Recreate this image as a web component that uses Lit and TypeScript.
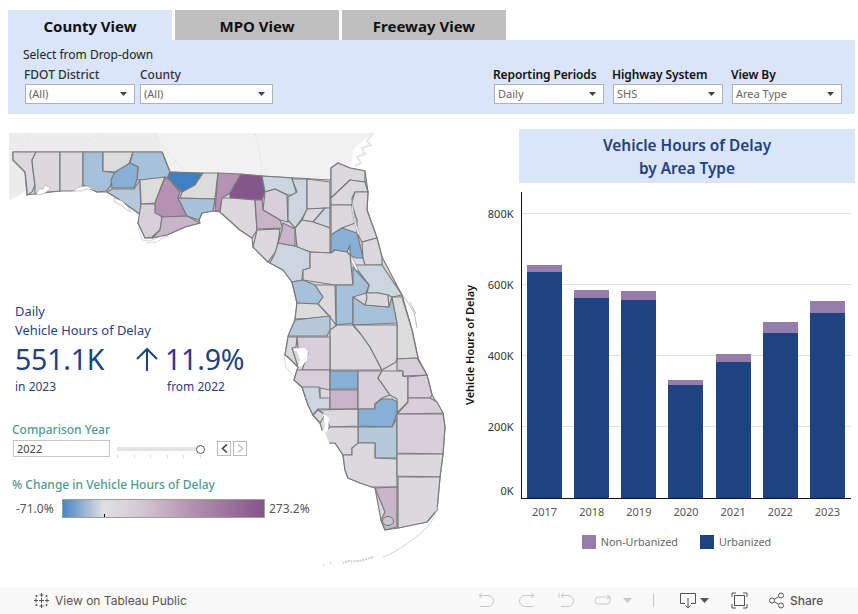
import {LitElement, html, css, svg} from 'lit';
import {customElement} from 'lit/decorators.js';

const G = '#dcd9de'; // neutral county
const N = '#dcdcdd';
const P1 = '#d9cfda';
const P2 = '#c9b5ca';
const P3 = '#b591b3';
const P4 = '#85568a';
const B1 = '#ccd6e0';
const B2 = '#b5c9da';
const B3 = '#a8c1da';
const B4 = '#88afd5';
const B5 = '#3f80c2';

// state outline, sits under the counties so no slivers show between them
const florida = '13,152 162,152 170,172 262,176 331,180 331,168 338,163 350,168 365,171 368,192 367,210 377,238 382,257 402,295 412,330 418,358 427,375 432,395 443,413 445,427 443,454 440,477 437,510 427,522 398,528 385,530 381,520 375,488 360,483 348,478 345,470 343,455 335,443 328,443 323,433 320,423 313,415 308,405 302,387 294,380 298,367 288,357 285,355 288,337 295,320 297,303 292,282 283,270 270,263 268,262 253,247 252,238 240,230 220,212 213,211 202,213 199,220 200,223 185,227 167,235 152,238 145,238 138,223 141,215 117,198 107,192 97,192 83,185 60,191 35,194 27,195 25,172 13,160';

// county outlines in page coordinates
const counties: [string, string][] = [
  [G, '13,152 36,152 32,160 33,170 35,185 32,192 27,195 27,190 25,172 13,160'],
  [G, '36,152 60,152 60,191 47,192 35,194 35,185 33,170 32,160'],
  [G, '60,152 83,152 83,185 80,190 70,191 60,191'],
  [B3, '83,152 103,152 103,171 115,173 110,187 106,191 97,192 83,185'],
  [N, '103,152 133,152 128,167 115,172 103,171'],
  [B3, '133,152 162,152 170,172 167,178 140,180 137,180 138,167 130,163'],
  [B4, '115,172 130,163 138,167 137,180 134,188 112,188 111,180'],
  [B2, '112,189 134,189 140,180 141,215 117,198 107,192'],
  [N, '140,180 165,177 155,203 141,204'],
  [P1, '141,204 155,204 162,218 160,230 152,237 145,238 138,223'],
  [P3, '165,177 170,180 180,192 178,198 187,216 163,217 155,213 155,203'],
  [P2, '162,217 187,216 200,223 185,227 167,235 152,238 160,230'],
  [B5, '170,172 203,173 195,185 182,192 168,178'],
  [N, '203,173 218,173 215,199 180,198 182,192 195,185'],
  [B3, '178,198 215,199 213,211 202,213 199,220 187,216'],
  [P3, '218,173 241,174 230,193 222,198 220,210 215,211'],
  [P4, '241,174 262,176 265,192 262,200 230,198 230,193'],
  [G, '222,198 230,198 255,200 257,230 252,238 240,230 220,212'],
  [B1, '262,176 292,178 297,195 288,195 275,189 265,192'],
  [P1, '265,192 275,189 287,195 288,222 280,220 263,210'],
  [P2, '255,200 262,200 263,210 280,220 283,228 257,229'],
  [G, '257,230 280,229 277,250 268,262 253,247'],
  [B1, '292,179 307,179 307,210 301,220 295,228 288,220 288,197 297,192'],
  [G, '307,179 330,182 330,208 307,209'],
  [G, '307,209 325,208 313,222 302,220'],
  [B1, '325,208 330,208 330,228 313,222'],
  [G, '302,220 313,222 330,228 330,253 310,252 297,247 295,228'],
  [B1, '278,243 295,246 310,252 310,268 303,270 302,280 292,282 283,270 270,263 275,253'],
  [P2, '283,223 295,229 295,246 278,243 282,230'],
  [G, '331,168 338,163 350,168 365,171 365,182 350,180 331,198 331,182'],
  [G, '331,198 350,180 365,182 368,192 355,192 352,198 353,205 331,205'],
  [G, '331,205 352,205 355,223 342,228 331,235'],
  [G, '355,192 368,192 367,210 377,238 362,242 357,233 357,220 352,205 353,198'],
  [B4, '331,235 342,228 357,233 360,245 363,258 356,258 350,255 350,245 347,252 335,250 331,253'],
  [G, '362,242 377,238 382,257 382,265 365,265 363,258'],
  [G, '310,252 331,253 335,250 347,252 350,255 353,285 335,285 303,280 303,270 310,268'],
  [B1, '354,265 365,265 382,265 402,295 392,297 388,295 378,293 367,293 369,285'],
  [B3, '353,267 369,285 366,293 353,297 353,323 336,325 336,285 353,285'],
  [B3, '353,297 365,305 389,307 392,297 397,323 353,325'],
  [G, '366,293 378,293 388,295 389,307 365,305 367,298'],
  [N, '392,297 402,297 412,330 418,358 397,359 397,323'],
  [B3, '292,282 303,280 315,285 323,297 318,304 297,303'],
  [G, '335,285 336,325 330,317 318,304 323,297 315,285'],
  [N, '297,303 318,304 330,317 320,318 295,319'],
  [B2, '295,320 320,317 330,316 330,330 327,336 288,336'],
  [G, '330,330 337,325 353,325 360,333 370,347 382,370 330,370 330,336'],
  [G, '353,325 397,325 397,359 396,362 382,370 370,347 360,333'],
  [P1, '297,337 330,337 330,370 302,370 308,353 303,350 298,348'],
  [G, '288,337 297,337 296,347 292,348 298,367 288,357 285,355'],
  [P1, '297,370 330,370 330,390 320,388 320,398 302,387 294,380'],
  [B1, '302,387 319,387 320,398 330,398 330,409 318,409 313,415 308,405'],
  [B4, '330,371 358,371 358,389 330,389'],
  [P2, '330,390 358,390 358,409 330,409'],
  [P1, '358,371 382,371 378,378 390,395 382,398 375,404 375,409 358,409'],
  [G, '382,371 403,371 403,376 408,377 408,402 397,413 397,399 390,395 378,378'],
  [P1, '397,359 417,358 427,375 403,376 403,371 397,370'],
  [P1, '408,377 427,375 432,395 430,398 408,398'],
  [P1, '408,398 430,398 437,402 443,413 397,414 408,402'],
  [B4, '358,409 375,409 375,404 382,399 392,399 397,402 397,413 392,427 358,426'],
  [B2, '358,427 392,427 397,418 397,458 375,458 375,443 358,443'],
  [G, '318,410 358,409 358,426 330,427 325,417 323,413'],
  [G, '313,415 318,410 325,415 320,423'],
  [G, '330,427 358,427 358,447 352,448 352,455 343,455 335,443 328,443 323,433'],
  [G, '343,455 352,455 352,448 358,443 375,443 375,458 397,459 397,487 372,487 360,483 348,478 345,470'],
  [P1, '397,414 443,414 445,427 443,454 397,453'],
  [G, '397,454 443,454 440,477 397,476'],
  [G, '398,477 440,477 437,510 427,522 398,528'],
  [P2, '375,488 397,487 397,527 385,530 381,520 385,512'],
];

const bars = [
  {year: '2017', urban: 226, non: 7},
  {year: '2018', urban: 200, non: 8},
  {year: '2019', urban: 198, non: 9},
  {year: '2020', urban: 113, non: 5},
  {year: '2021', urban: 136, non: 8},
  {year: '2022', urban: 165, non: 11},
  {year: '2023', urban: 185, non: 12},
];

const caret = html`<svg class="caret" width="7" height="4" viewBox="0 0 7 4"><path d="M0 0h7L3.500 4z" fill="#444"/></svg>`;

@customElement('app-root')
export class AppRoot extends LitElement {
  static styles = css`
    :host {
      display: flex;
      flex-direction: column;
      width: 858px;
      height: 614px;
      overflow: hidden;
      position: relative;
      background: #fff;
      font-family: "Noto Sans", sans-serif;
      color: #333;
    }
    .tabs {
      display: flex;
      gap: 3px;
      margin: 10px 0 0 8px;
    }
    .tab {
      width: 164px;
      height: 30px;
      line-height: 32px;
      background: #bfbfbf;
      color: #111;
      font-size: 15px;
      font-weight: 700;
      text-align: center;
    }
    .tab.on {
      background: #dae5f9;
    }
    .filters {
      margin: 0 3px 0 8px;
      height: 74px;
      background: #dae5f9;
      box-sizing: border-box;
      padding: 7px 13px 0 15px;
    }
    .hint {
      font-size: 12px;
      line-height: 16px;
      color: #222;
    }
    .filter-row {
      display: flex;
      justify-content: space-between;
      margin-top: 4px;
    }
    .filter-group {
      display: flex;
      gap: 5px;
    }
    .filter-group.right {
      gap: 9px;
    }
    .filter label {
      display: block;
      font-size: 12px;
      line-height: 16px;
      font-weight: 500;
      color: #333;
      margin-left: 1px;
    }
    .filter.county label {
      margin-left: 0;
    }
    .right .filter label {
      font-weight: 600;
      color: #111;
      margin-left: -1px;
      letter-spacing: -0.1px;
    }
    .select {
      display: flex;
      align-items: center;
      justify-content: space-between;
      box-sizing: border-box;
      width: 110px;
      height: 20px;
      margin: 1px 0 0 2px;
      padding: 0 7px 2px 3px;
      background: #fff;
      border: 1px solid #b0b0b0;
      font-size: 11px;
      color: #666;
    }
    .select .caret {
      margin-top: 2px;
    }
    .select.wide {
      width: 133px;
      margin-left: 0;
    }
    .right .select {
      margin-left: 0;
    }
    main {
      display: grid;
      grid-template-columns: 519px 336px;
      flex: 1;
      margin-top: 15px;
      min-height: 0;
    }
    .map-panel {
      position: relative;
    }
    .map {
      position: absolute;
      left: 0;
      top: -129px;
    }
    .kpi {
      position: absolute;
      left: 15px;
      top: 173px;
      width: 240px;
      color: #1f4281;
    }
    .kpi .cap {
      font-size: 12.9px;
      line-height: 19px;
    }
    .kpi-row {
      display: grid;
      grid-template-columns: 121px 1fr;
    }
    .big {
      font-size: 28.5px;
      line-height: 38px;
      letter-spacing: -0.2px;
    }
    .delta {
      display: flex;
      align-items: center;
      gap: 7px;
    }
    .small {
      font-size: 12px;
      line-height: 16px;
      margin-top: 1px;
    }
    .small.from {
      margin-left: 31px;
    }
    .teal {
      font-size: 12px;
      font-weight: 500;
      line-height: 16px;
      color: #4e9b8f;
    }
    .year-box {
      position: absolute;
      left: 12px;
      top: 293px;
      width: 240px;
    }
    .year-row {
      display: flex;
      align-items: center;
      margin: 2px 0 0 1px;
    }
    .year-input {
      box-sizing: border-box;
      width: 97px;
      height: 17px;
      line-height: 15px;
      padding-left: 3px;
      border: 1px solid #c4c4c4;
      font-size: 11px;
      color: #444;
    }
    .slider {
      position: relative;
      width: 88px;
      height: 17px;
      margin-left: 7px;
    }
    .track {
      position: absolute;
      left: 0;
      top: 7px;
      width: 83px;
      height: 4px;
      background: #e3e3e3;
    }
    .thumb {
      position: absolute;
      left: 79px;
      top: 5px;
      width: 7px;
      height: 7px;
      border: 1px solid #555;
      border-radius: 50%;
      background: #fff;
    }
    .ticks {
      position: absolute;
      left: 0;
      top: 15px;
      display: flex;
      width: 84px;
      justify-content: space-between;
    }
    .ticks i {
      width: 1px;
      height: 3px;
      background: #ddd;
    }
    .step {
      display: flex;
      align-items: center;
      justify-content: center;
      box-sizing: border-box;
      width: 14px;
      height: 15px;
      border: 1px solid #bbb;
      margin-left: 2px;
    }
    .step.prev {
      margin-left: 12px;
    }
    .scale {
      position: absolute;
      left: 12px;
      top: 348px;
      width: 310px;
    }
    .scale-row {
      display: flex;
      align-items: center;
      margin-top: 6px;
      font-size: 12px;
      color: #555;
    }
    .scale-row .min {
      width: 50px;
      padding-left: 4px;
      box-sizing: border-box;
    }
    .ramp {
      position: relative;
      box-sizing: border-box;
      width: 203px;
      height: 19px;
      margin-right: 4px;
      border: 1px solid #a39d96;
      background: linear-gradient(90deg, #4a86c5 0%, #e0e0e0 20.5%, #d5c8d5 38%, #b795b3 62%, #85548a 100%);
    }
    .ramp i {
      position: absolute;
      left: 41px;
      bottom: 0;
      width: 1px;
      height: 3px;
      background: #111;
    }
    .chart-panel {
      display: flex;
      flex-direction: column;
    }
    .chart-title {
      height: 54px;
      background: #dae5f9;
      color: #1f4281;
      font-size: 15.4px;
      font-weight: 600;
      line-height: 23px;
      text-align: center;
      padding-top: 5px;
      box-sizing: border-box;
    }
    .chart {
      height: 307px;
      margin: 9px 0 0 2px;
    }
    .plot {
      position: relative;
      display: grid;
      grid-template-columns: repeat(7, 1fr);
      align-items: end;
      width: 330px;
      height: 307px;
      box-sizing: border-box;
      border-bottom: 1px solid #111;
    }
    .plot::before {
      content: "";
      position: absolute;
      left: 0;
      top: 0;
      bottom: -1px;
      width: 1px;
      background: #111;
    }
    .grid-line {
      position: absolute;
      left: 1px;
      right: 0;
      height: 1px;
      background: #e2e2e2;
    }
    .tick-label {
      position: absolute;
      right: 337.5px;
      font-size: 11px;
      line-height: 14px;
      color: #333;
      transform: translateY(-7px);
    }
    .y-title {
      position: absolute;
      left: -52px;
      top: 153px;
      transform: translate(-50%, -50%) rotate(-90deg);
      white-space: nowrap;
      font-size: 11px;
      font-weight: 600;
      color: #111;
    }
    .col {
      position: relative;
      display: flex;
      flex-direction: column;
      align-items: center;
    }
    .urban, .non {
      width: 35px;
    }
    .urban {
      background: #1f4281;
    }
    .non {
      background: #957dab;
    }
    .years {
      display: grid;
      grid-template-columns: repeat(7, 1fr);
      width: 330px;
      margin: 6px 0 0 2px;
      font-size: 11px;
      line-height: 14px;
      text-align: center;
      color: #555;
    }
    .legend {
      display: flex;
      justify-content: center;
      gap: 22px;
      margin: 15px 21px 0 0;
      font-size: 10.8px;
      color: #666;
    }
    .legend span {
      display: flex;
      align-items: center;
      gap: 5px;
    }
    .legend i {
      width: 14px;
      height: 14px;
    }
    footer {
      display: flex;
      align-items: center;
      height: 27px;
      background: #f9f9f9;
      font-family: Inter, "Liberation Sans", sans-serif;
      font-size: 12px;
      color: #555;
      position: relative;
    }
    footer .item {
      position: absolute;
      top: 5px;
      display: flex;
      align-items: center;
      gap: 5px;
      height: 17px;
    }
  `;

  private renderMap() {
    return html`<svg class="map" width="500" height="590" viewBox="0 0 500 590">
      <polygon points="9,133 156,133 162,152 13,152 13,160 25,172 27,190 9,201" fill="#ececec"/>
      <polygon points="156,133 373,133 358,145 353,150 352,160 350,168 338,163 331,168 331,180 262,176 170,172 162,152" fill="#f1f1f1"/>
      <path d="M373 133l-6 8 4 4-9 3 3 6-8 3 4 6-6 3" fill="none" stroke="#e6e6e6" stroke-width="2"/>
      <path d="M30 133C28 145 18 150 9 156M100 133c-6 6-20 12-26 19M156 133c2 14 20 26 30 40M255 133c4 16 8 30 6 42" fill="none" stroke="#e6e6e6"/>
      <polygon points=${florida} fill=${G} stroke="#7a7a7a" stroke-width="1.200" stroke-linejoin="round"/>
      ${counties.map(([fill, pts]) => svg`<polygon points=${pts} fill=${fill} stroke="#7a7a7a" stroke-width="1.200" stroke-linejoin="round"/>`)}
      <path d="M36 195l3-6 4 0 2-4 4 2 2 1-6 5-6 2zM73 191l6-4 8-1 6 3 6 0-2 1-10-1-6 2z" fill="#fff" stroke="#999" stroke-width=".5"/>
      <path d="M114 198l8 3 6 6 3 5-4-2-6-5-6-3z" fill="#fff" stroke="#999" stroke-width=".5"/>
      <path d="M352 198l2 16 3 12 3 8-2 1-3-10-3-14z" fill="#fff" stroke="#888" stroke-width=".5"/>
      <path d="M351 255l5 10 3 7-4-3-4-8z" fill="#fff" stroke="#777" stroke-width=".6"/>
      <path d="M293 350l4 1 3 8-2 8 4-1 5-6 1-8-3-4-6 0z" fill="#fff"/>
      <path d="M323 413l6 5-1 12-3 3 5 12-5-1-4-12 4-4-1-10z" fill="#fff"/>
      <ellipse cx="388" cy="521" rx="5.500" ry="4.500" fill="#c8c8cc" stroke="#777"/>
      <path d="M402 294l12 18 3 16M410 302l6 12" fill="none" stroke="#aaa" stroke-width=".8"/>
      <path d="M437 507c-1 8-5 15-10 20-10 10-28 24-44 30" fill="none" stroke="#d4d4d4" stroke-width="1"/>
      <path d="M373 557c-8 3-16 5-24 4l-6 2M323 565h1M330 563h1" fill="none" stroke="#cfcfcf" stroke-width="2" stroke-dasharray="2 1"/>
      <path d="M138 228l4 12 8 1 10-4 8-1-12 6-10 1M284 356l2 12 6 6" fill="none" stroke="#cfcfcf" stroke-width=".8"/>
    </svg>`;
  }

  private renderFooter() {
    const s = '#c7c7c7';
    return html`<footer>
      <span class="item" style="left:33px">
        <svg width="17" height="17" viewBox="0 0 17 17" stroke="#555" stroke-width="1" fill="none">
          <path d="M8.500 1v4M6.500 3h4M8.500 12v4M6.500 14h4M1 8.500h4M3 6.500v4M12 8.500h4M14 6.500v4M8.500 6v5M6 8.500h5M3.500 3v2M2.500 4h2M13.500 3v2M12.500 4h2M3.500 12v2M2.500 13h2M13.500 12v2M12.500 13h2"/>
        </svg>
        View on Tableau Public
      </span>
      <span class="item" style="left:478px"><svg width="17" height="17" viewBox="0 0 17 17" fill="none" stroke=${s}><path d="M1 3.500h9a5.500 5.500 0 0 1 0 11H2M1 3.500l3-2.500M1 3.500l3 2.500"/></svg></span>
      <span class="item" style="left:518px"><svg width="17" height="17" viewBox="0 0 17 17" fill="none" stroke=${s}><path d="M16 3.500H7a5.500 5.500 0 0 0 0 11h8M16 3.500l-3-2.500M16 3.500l-3 2.500"/></svg></span>
      <span class="item" style="left:558px"><svg width="16" height="17" viewBox="0 0 16 17" fill="none" stroke=${s}><path d="M1 1v5M3 3.500h7a5 5 0 0 1 0 11H3M3 3.500l3-2.500M3 3.500l3 2.500"/></svg></span>
      <span class="item" style="left:594px"><svg width="17" height="17" viewBox="0 0 17 17" fill="none" stroke=${s}><path d="M16 5H4.500a3.500 3.500 0 0 0 0 7h8a3.500 3.500 0 0 0 3.500-3.500V5M16 5l-3-2M16 5l-3 2"/></svg></span>
      <span class="item" style="left:623px"><svg width="9" height="5" viewBox="0 0 9 5"><path d="M0 0h9L4.500 5z" fill=${s}/></svg></span>
      <span class="item" style="left:653px"><svg width="1" height="13" viewBox="0 0 1 13"><path d="M.5 0v13" stroke=${s}/></svg></span>
      <span class="item" style="left:680px"><svg width="16" height="17" viewBox="0 0 16 17" fill="none" stroke="#555"><path d="M5 11.500H.5v-10h15v10H11M8 6v10M5.500 13.500L8 16l2.500-2.500"/></svg></span>
      <span class="item" style="left:700px"><svg width="9" height="5" viewBox="0 0 9 5"><path d="M0 0h9L4.500 5z" fill="#555"/></svg></span>
      <span class="item" style="left:731px"><svg width="17" height="17" viewBox="0 0 17 17" fill="none" stroke="#555"><path d="M1 5V1h4M12 1h4v4M16 12v4h-4M5 16H1v-4"/><rect x="3.500" y="3.500" width="10" height="10"/></svg></span>
      <span class="item" style="left:769px;gap:6px"><svg width="15" height="17" viewBox="0 0 15 17" fill="none" stroke="#555"><circle cx="3" cy="8.500" r="2.500"/><circle cx="12" cy="3.500" r="2.500"/><circle cx="12" cy="13.500" r="2.500"/><path d="M5.200 7.300l4.600-2.600M5.200 9.700l4.600 2.600"/></svg><span style="font-weight:500">Share</span></span>
    </footer>`;
  }

  protected render() {
    const grid = [['800K', 20.5], ['600K', 91.5], ['400K', 163], ['200K', 234]] as const;
    return html`
      <div class="tabs">
        <div class="tab on">County View</div>
        <div class="tab">MPO View</div>
        <div class="tab">Freeway View</div>
      </div>
      <div class="filters">
        <div class="hint">Select from Drop-down</div>
        <div class="filter-row">
          <div class="filter-group">
            <div class="filter"><label>FDOT District</label><div class="select">(All)${caret}</div></div>
            <div class="filter county"><label>County</label><div class="select wide">(All)${caret}</div></div>
          </div>
          <div class="filter-group right">
            <div class="filter"><label>Reporting Periods</label><div class="select">Daily${caret}</div></div>
            <div class="filter"><label>Highway System</label><div class="select">SHS${caret}</div></div>
            <div class="filter"><label>View By</label><div class="select">Area Type${caret}</div></div>
          </div>
        </div>
      </div>
      <main>
        <section class="map-panel">
          ${this.renderMap()}
          <div class="kpi">
            <div class="cap">Daily</div>
            <div class="cap">Vehicle Hours of Delay</div>
            <div class="kpi-row">
              <div>
                <div class="big">551.1K</div>
                <div class="small">in 2023</div>
              </div>
              <div>
                <div class="big delta">
                  <svg width="22" height="24" viewBox="0 0 22 24" fill="none" stroke="#1f4281" stroke-width="2"><path d="M11 24V2M1 12L11 2l10 10"/></svg>
                  11.9%
                </div>
                <div class="small from">from 2022</div>
              </div>
            </div>
          </div>
          <div class="year-box">
            <div class="teal">Comparison Year</div>
            <div class="year-row">
              <div class="year-input">2022</div>
              <div class="slider">
                <div class="track"></div>
                <div class="thumb"></div>
                <div class="ticks"><i></i><i></i><i></i><i></i><i></i><i></i></div>
              </div>
              <div class="step prev"><svg width="7" height="9" viewBox="0 0 7 9" fill="none" stroke="#444" stroke-width="1.600"><path d="M6 .5L1.500 4.500 6 8.500"/></svg></div>
              <div class="step"><svg width="7" height="9" viewBox="0 0 7 9" fill="none" stroke="#c8c8c8" stroke-width="1.600"><path d="M1 .5l4.500 4L1 8.500"/></svg></div>
            </div>
          </div>
          <div class="scale">
            <div class="teal">% Change in Vehicle Hours of Delay</div>
            <div class="scale-row">
              <span class="min">-71.0%</span>
              <div class="ramp"><i></i></div>
              <span>273.2%</span>
            </div>
          </div>
        </section>
        <section class="chart-panel">
          <div class="chart-title">Vehicle Hours of Delay<br />by Area Type</div>
          <div class="chart">
            <div class="plot">
              ${grid.map(([label, y]) => html`
                <div class="grid-line" style="top:${y}px"></div>
                <div class="tick-label" style="top:${y + 1}px">${label}</div>`)}
              <div class="tick-label" style="top:299px">0K</div>
              <div class="y-title">Vehicle Hours of Delay</div>
              ${bars.map((b) => html`<div class="col">
                <div class="non" style="height:${b.non}px"></div>
                <div class="urban" style="height:${b.urban}px"></div>
              </div>`)}
            </div>
          </div>
          <div class="years">${bars.map((b) => html`<span>${b.year}</span>`)}</div>
          <div class="legend">
            <span><i style="background:#957dab"></i>Non-Urbanized</span>
            <span><i style="background:#1f4281"></i>Urbanized</span>
          </div>
        </section>
      </main>
      ${this.renderFooter()}
    `;
  }
}
